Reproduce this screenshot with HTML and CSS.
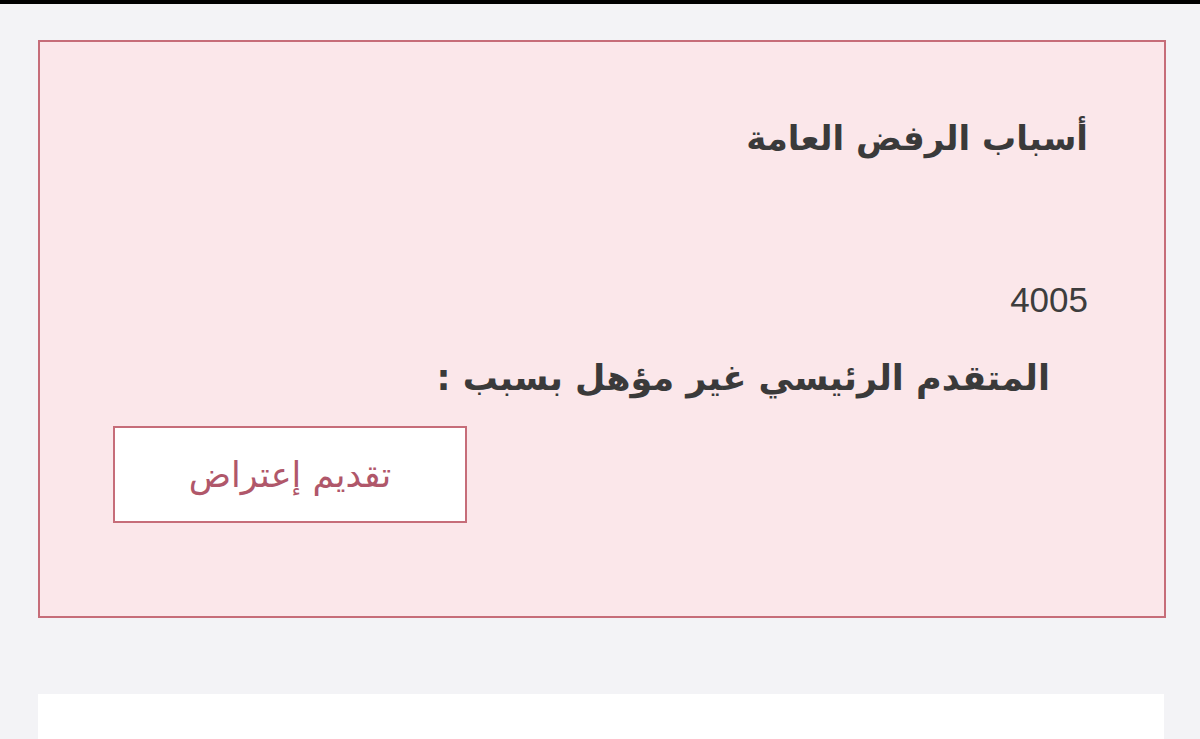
FILE: index.html
```html
<!DOCTYPE html>
<html lang="ar" dir="rtl">
<head>
    <meta charset="UTF-8">
    <meta name="viewport" content="width=device-width, initial-scale=1.0">
    <title>أسباب الرفض</title>
    <link rel="stylesheet" href="styles.css">
</head>
<body>
    <div class="top-bar"></div>
    <div class="page">
        <div class="reject-box">
            <h2 class="reject-title">أسباب الرفض العامة</h2>
            <p class="reject-code">4005</p>
            <p class="reject-reason">المتقدم الرئيسي غير مؤهل بسبب :</p>
            <div class="actions">
                <a href="#" class="objection-button">تقديم إعتراض</a>
            </div>
        </div>
        <div class="next-card"></div>
    </div>
</body>
</html>
```

FILE: styles.css
```css
* {
    margin: 0;
    padding: 0;
    box-sizing: border-box;
}
body {
    font-family: 'DejaVu Sans', sans-serif;
    background: #f3f3f6;
    color: #333;
    height: 739px;
    overflow: hidden;
}
.top-bar {
    height: 4px;
    background: #000;
}
.page {
    padding: 36px 34px 0 38px;
}
.reject-box {
    background: #fbe7ea;
    border: 2px solid #c66d79;
    height: 578px;
    padding: 76px 76px 0 73px;
}
.reject-title {
    font-size: 34px;
    font-weight: bold;
    line-height: 40px;
    color: #3a3a3a;
}
.reject-code {
    font-family: 'Liberation Sans', sans-serif;
    font-size: 35px;
    line-height: 40px;
    margin-top: 122px;
    color: #3d3d3d;
}
.reject-reason {
    font-size: 35px;
    font-weight: bold;
    line-height: 40px;
    margin-top: 38px;
    margin-right: 38px;
    color: #3a3a3a;
}
.actions {
    display: flex;
    justify-content: flex-end;
    margin-top: 28px;
}
.objection-button {
    width: 354px;
    height: 97px;
    background: #fff;
    border: 2px solid #c66d79;
    color: #b0576a;
    font-size: 35px;
    text-decoration: none;
    display: flex;
    align-items: center;
    justify-content: center;
}
.next-card {
    background: #fff;
    height: 60px;
    margin: 76px 2px 0 0;
}
```
